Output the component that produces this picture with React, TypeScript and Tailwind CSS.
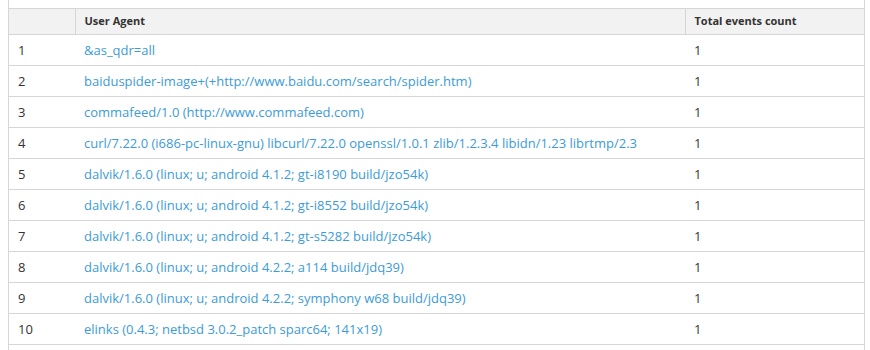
import React from "react";

const rows = [
  "&as_qdr=all",
  "baiduspider-image+(+http://www.baidu.com/search/spider.htm)",
  "commafeed/1.0 (http://www.commafeed.com)",
  "curl/7.22.0 (i686-pc-linux-gnu) libcurl/7.22.0 openssl/1.0.1 zlib/1.2.3.4 libidn/1.23 librtmp/2.3",
  "dalvik/1.6.0 (linux; u; android 4.1.2; gt-i8190 build/jzo54k)",
  "dalvik/1.6.0 (linux; u; android 4.1.2; gt-i8552 build/jzo54k)",
  "dalvik/1.6.0 (linux; u; android 4.1.2; gt-s5282 build/jzo54k)",
  "dalvik/1.6.0 (linux; u; android 4.2.2; a114 build/jdq39)",
  "dalvik/1.6.0 (linux; u; android 4.2.2; symphony w68 build/jdq39)",
  "elinks (0.4.3; netbsd 3.0.2_patch sparc64; 141x19)",
];

export default function App() {
  return (
    <div
      className="w-[870px] h-[350px] bg-white overflow-hidden"
      style={{ fontFamily: '"Open Sans", "Liberation Sans", sans-serif' }}
    >
      <div className="ml-[8px] w-[857px] border-x border-[#d6d6d6] pt-[8px] h-[350px]">
        <table className="w-full border-collapse text-[13px] text-[#333]">
          <thead>
            <tr className="bg-[#f2f2f2] h-[26px]">
              <th className="w-[66px] border-y border-r border-[#d6d6d6] p-0"></th>
              <th className="w-[610px] border-y border-r border-[#d6d6d6] px-[9px] py-0 text-left text-[11px] font-bold">
                User Agent
              </th>
              <th className="border-y border-[#d6d6d6] px-[9px] py-0 text-left text-[11px] font-bold">
                Total events count
              </th>
            </tr>
          </thead>
          <tbody>
            {rows.map((ua, i) => (
              <tr key={i} className="h-[31px] border-b border-[#d6d6d6]">
                <td className="pl-[9px] pr-[9px] py-0 pt-[1px]">{i + 1}</td>
                <td className="px-[9px] py-0 pt-[1px] text-[#3d9bd6] whitespace-nowrap">{ua}</td>
                <td className="px-[9px] py-0 pt-[1px]">1</td>
              </tr>
            ))}
          </tbody>
        </table>
      </div>
    </div>
  );
}
